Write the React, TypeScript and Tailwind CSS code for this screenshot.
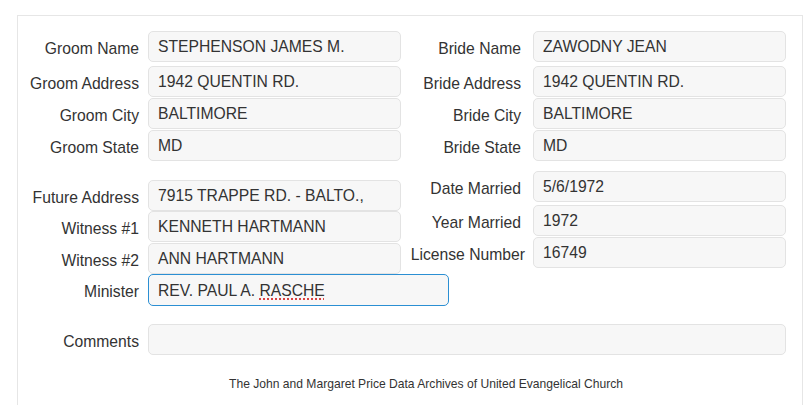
const groom = [
  { label: "Groom Name", value: "STEPHENSON JAMES M." },
  { label: "Groom Address", value: "1942 QUENTIN RD." },
  { label: "Groom City", value: "BALTIMORE" },
  { label: "Groom State", value: "MD" },
];

const bride = [
  { label: "Bride Name", value: "ZAWODNY JEAN" },
  { label: "Bride Address", value: "1942 QUENTIN RD." },
  { label: "Bride City", value: "BALTIMORE" },
  { label: "Bride State", value: "MD" },
];

const marriage = [
  { label: "Date Married", value: "5/6/1972", w: "w-[120px]", gap: "mr-[12px]" },
  { label: "Year Married", value: "1972", w: "w-[120px]", gap: "mr-[12px]" },
  { label: "License Number", value: "16749", w: "w-[124px]", gap: "mr-[8px]" },
];

function Field({
  label,
  children,
  labelW,
  gap,
  inputCls = "w-[253px] h-[31px] border-[#e3e3e3]",
  rowCls = "",
}: {
  label: string;
  children?: React.ReactNode;
  labelW: string;
  gap: string;
  inputCls?: string;
  rowCls?: string;
}) {
  return (
    <div className={`flex items-center ${rowCls}`}>
      <label className={`${labelW} ${gap} shrink-0 text-right pt-[4px] whitespace-nowrap`}>{label}</label>
      <div className={`${inputCls} shrink-0 flex items-center px-[9px] pt-[1px] rounded-[5px] border bg-[#f7f7f7] whitespace-nowrap`}>
        {children}
      </div>
    </div>
  );
}

export default function App() {
  return (
    <div
      className="w-[805px] h-[405px] overflow-hidden bg-white pt-[15px] pl-[17px] text-[#333] text-[15.7px]"
      style={{ fontFamily: '"Liberation Sans", Arial, sans-serif' }}
    >
      <div className="w-[786px] h-[400px] border-t border-x border-[#e6e6e6] pt-[15px]">
        <div className="flex">
          {/* groom side */}
          <div className="w-[383px] shrink-0 flex flex-col">
            {groom.map((f, i) => (
              <Field key={f.label} label={f.label} labelW="w-[121px]" gap="mr-[9px]" rowCls={i === 0 ? "mb-[4px]" : i > 1 ? "mt-px" : ""}>
                {f.value}
              </Field>
            ))}
            <div className="mt-[19px] flex flex-col">
              <Field label="Future Address" labelW="w-[121px]" gap="mr-[9px]">7915 TRAPPE RD. - BALTO.,</Field>
              <Field label="Witness #1" labelW="w-[121px]" gap="mr-[9px]">KENNETH HARTMANN</Field>
              <Field label="Witness #2" labelW="w-[121px]" gap="mr-[9px]" rowCls="mt-px">ANN HARTMANN</Field>
              <Field
                label="Minister"
                labelW="w-[121px]"
                gap="mr-[9px]"
                inputCls="w-[301px] h-[32px] border-[#2b8fd3]"
              >
                REV. PAUL A.&nbsp;
                <span className="underline decoration-dotted decoration-[#d01010] underline-offset-[3px]">RASCHE</span>
              </Field>
            </div>
          </div>

          {/* bride side */}
          <div className="flex flex-col">
            {bride.map((f, i) => (
              <Field key={f.label} label={f.label} labelW="w-[120px]" gap="mr-[12px]" rowCls={i === 0 ? "mb-[4px]" : i > 1 ? "mt-px" : ""}>
                {f.value}
              </Field>
            ))}
            <div className="mt-[10px] flex flex-col">
              {marriage.map((f, i) => (
                <Field key={f.label} label={f.label} labelW={f.w} gap={f.gap} rowCls={i === 0 ? "mb-[3px]" : i > 1 ? "mt-px" : ""}>
                  {f.value}
                </Field>
              ))}
            </div>
          </div>
        </div>

        <Field
          label="Comments"
          labelW="w-[121px]"
          gap="mr-[9px]"
          rowCls="mt-[18px]"
          inputCls="w-[638px] h-[31px] border-[#e3e3e3]"
        />

        <p className="mt-[21px] text-center text-[12.1px] leading-[17px] text-[#333] pl-[32px]">
          The John and Margaret Price Data Archives of United Evangelical Church
        </p>
      </div>
    </div>
  );
}
